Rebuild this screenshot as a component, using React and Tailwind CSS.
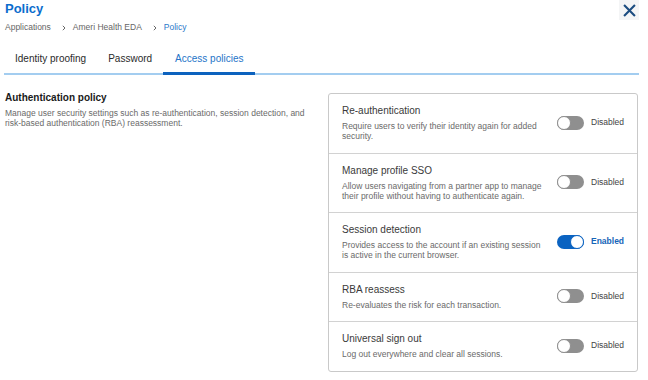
import { useState } from "react";

const policies = [
  {
    id: "reauth",
    title: "Re-authentication",
    desc: "Require users to verify their identity again for added security.",
    on: false
  },
  {
    id: "sso",
    title: "Manage profile SSO",
    desc: "Allow users navigating from a partner app to manage their profile without having to authenticate again.",
    on: false
  },
  {
    id: "session",
    title: "Session detection",
    desc: "Provides access to the account if an existing session is active in the current browser.",
    on: true
  },
  {
    id: "rba",
    title: "RBA reassess",
    desc: "Re-evaluates the risk for each transaction.",
    on: false
  },
  {
    id: "signout",
    title: "Universal sign out",
    desc: "Log out everywhere and clear all sessions.",
    on: false
  }
];

function Chevron() {
  return (
    <svg
      width="4"
      height="6"
      viewBox="0 0 4 6"
      className="ml-[11px] mr-[7px] mt-[2px]"
    >
      <path d="M0.8 0.8 L3 3 L0.8 5.2" fill="none" stroke="#666" strokeWidth="1" />
    </svg>
  );
}

function Toggle({ on, onClick }) {
  return (
    <button
      onClick={onClick}
      className={
        on
          ? "relative w-[27px] h-[14px] rounded-full bg-[#0b63c1] flex items-center justify-end"
          : "relative w-[27px] h-[14px] rounded-full bg-[#8f8f8f] flex items-center justify-start"
      }
    >
      <span
        className={
          on
            ? "w-[14px] h-[14px] rounded-full bg-white border-[1.5px] border-[#0b63c1]"
            : "w-[14px] h-[14px] rounded-full bg-white border border-[#8f8f8f]"
        }
      ></span>
    </button>
  );
}

export default function App() {

  const [tab, setTab] = useState("access");

  const [state, setState] = useState(
    Object.fromEntries(policies.map((p) => [p.id, p.on]))
  );

  const tabs = [
    { id: "identity", label: "Identity proofing" },
    { id: "password", label: "Password" },
    { id: "access", label: "Access policies" }
  ];

  return (
    <div className="w-[648px] h-[380px] bg-white overflow-hidden font-['Liberation_Sans',Arial,sans-serif]">

      {/* Header */}
      <div className="flex justify-between pl-[5px] pr-[9px]">

        <div>
          <h1 className="pt-[1px] text-[13px] leading-[16px] font-bold text-[#0b6dcd]">
            Policy
          </h1>

          <div className="mt-[4px] flex items-center text-[8.5px] leading-[12px] text-[#666]">
            <span>Applications</span>
            <Chevron />
            <span>Ameri Health EDA</span>
            <Chevron />
            <span className="text-[#2a78c9]">Policy</span>
          </div>
        </div>

        <button className="w-[20px] h-[20px] bg-[#f4f5f6] flex items-center justify-center">
          <svg width="13" height="13" viewBox="0 0 13 13">
            <path
              d="M1.8 1.8 L11.2 11.2 M11.2 1.8 L1.8 11.2"
              stroke="#1b4c80"
              strokeWidth="2.1"
              strokeLinecap="square"
            />
          </svg>
        </button>

      </div>

      {/* Tabs */}
      <div className="mt-[10px] mx-[4px] w-[635px] flex border-b-2 border-[#a3cdf0]">
        {tabs.map((t) => (
          <button
            key={t.id}
            onClick={() => setTab(t.id)}
            className={
              tab === t.id
                ? "px-[12px] pt-[8.5px] pb-[7.5px] -mb-[2px] border-b-[3px] border-[#0c62be] text-[10px] leading-[13px] text-[#2474c8]"
                : "px-[11px] pt-[8.5px] pb-[7.5px] -mb-[2px] border-b-[3px] border-transparent text-[10px] leading-[13px] text-[#2a2a2a]"
            }
          >
            {t.label}
          </button>
        ))}
      </div>

      {/* Content */}
      <div className="flex pl-[5px] pr-[10px] pt-[16px]">

        <div className="w-[323px] pr-[13px]">
          <h2 className="text-[10px] leading-[13px] font-bold text-[#1a1a1a]">
            Authentication policy
          </h2>
          <p className="mt-[5px] text-[8.5px] leading-[9.5px] text-[#6a6a6a]">
            Manage user security settings such as re-authentication, session detection, and risk-based authentication (RBA) reassessment.
          </p>
        </div>

        <div className="flex-1 mt-[2px] border border-[#c9c9c9] rounded-[3px] divide-y divide-[#d2d2d2]">
          {policies.map((p) => (
            <div
              key={p.id}
              className="flex items-center pl-[13px] pr-[13px] pt-[10px] pb-[11.5px]"
            >
              <div className="w-[204px]">
                <div className="text-[10px] leading-[13px] text-[#3a3a3a]">
                  {p.title}
                </div>
                <div className="mt-[4px] text-[8.5px] leading-[10px] text-[#6a6a6a]">
                  {p.desc}
                </div>
              </div>

              <div className="ml-auto flex items-center">
                <Toggle
                  on={state[p.id]}
                  onClick={() =>
                    setState({ ...state, [p.id]: !state[p.id] })
                  }
                />
                <span
                  className={
                    state[p.id]
                      ? "ml-[7px] w-[33px] whitespace-nowrap text-[8.5px] font-bold text-[#1664b8]"
                      : "ml-[7px] w-[33px] whitespace-nowrap text-[8.5px] text-[#444]"
                  }
                >
                  {state[p.id] ? "Enabled" : "Disabled"}
                </span>
              </div>
            </div>
          ))}
        </div>

      </div>

    </div>
  );
}
